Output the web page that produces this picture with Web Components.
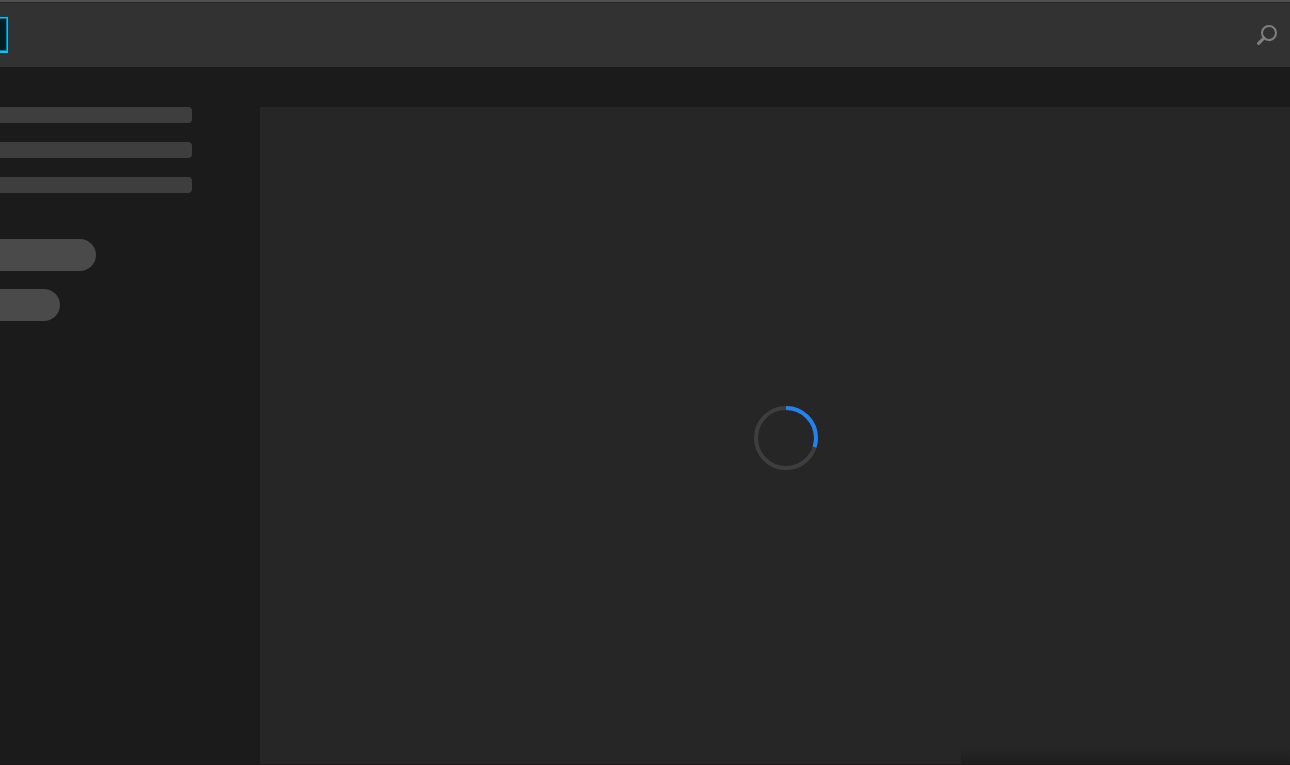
<!DOCTYPE html>
<html lang="en">
<head>
<meta charset="utf-8">
<title>Loading</title>
<style>
  body {
    margin: 0;
    background: #1b1b1b;
    font-family: "Liberation Sans", sans-serif;
  }
</style>
</head>
<body>
<app-shell>
  <app-header slot="header"></app-header>
  <side-nav slot="side">
    <skeleton-bar></skeleton-bar>
    <skeleton-bar></skeleton-bar>
    <skeleton-bar></skeleton-bar>
    <skeleton-bar slot="actions" kind="pill" size="large"></skeleton-bar>
    <skeleton-bar slot="actions" kind="pill"></skeleton-bar>
  </side-nav>
  <content-panel>
    <progress-circle value="30"></progress-circle>
  </content-panel>
</app-shell>

<script>
class AppShell extends HTMLElement {
  constructor() {
    super()
    this.attachShadow({ mode: 'open' }).innerHTML = `
      <style>
        :host {
          display: flex;
          flex-direction: column;
          box-sizing: border-box;
          min-height: 100vh;
          overflow: hidden;
          border-bottom: 1px solid #1b161a;
        }
        .body {
          flex: 1;
          display: grid;
          grid-template-columns: 260px 1fr;
          padding-top: 40px;
        }
        main {
          display: grid;
        }
      </style>
      <slot name="header"></slot>
      <div class="body">
        <slot name="side"></slot>
        <main><slot></slot></main>
      </div>
    `
  }
}

class AppHeader extends HTMLElement {
  constructor() {
    super()
    this.attachShadow({ mode: 'open' }).innerHTML = `
      <style>
        :host {
          display: block;
          border-top: 2px solid #505050;
          background: #323232;
        }
        header {
          display: flex;
          align-items: center;
          justify-content: space-between;
          height: 64px;
          padding-right: 12px;
          border-top: 1px solid #292929;
          overflow: hidden;
        }
        .logo {
          box-sizing: border-box;
          width: 36px;
          height: 36px;
          margin-left: -28px;
          border: 1px solid #00c8ff;
          border-bottom-width: 2px;
          background: #001d26;
          box-shadow: inset 0 0 0 1px #007c9e;
        }
        button {
          display: block;
          padding: 0;
          border: 0;
          background: none;
          color: #808080;
          cursor: pointer;
        }
        svg {
          display: block;
        }
      </style>
      <header>
        <a class="logo" href="#" aria-label="Home"></a>
        <button type="button" aria-label="Search">
          <svg width="22" height="22" viewBox="0 0 22 22" fill="none" stroke="currentColor" aria-hidden="true">
            <circle cx="13" cy="9" r="7" stroke-width="2"/>
            <path d="M8 14 2.6 19.4" stroke-width="3" stroke-linecap="round"/>
          </svg>
        </button>
      </header>
    `
  }
}

class SideNav extends HTMLElement {
  constructor() {
    super()
    this.attachShadow({ mode: 'open' }).innerHTML = `
      <style>
        :host {
          display: block;
          padding-right: 68px;
        }
        nav, .actions {
          display: grid;
          gap: 19px;
        }
        .actions {
          gap: 18px;
          margin-top: 46px;
        }
      </style>
      <nav aria-busy="true"><slot></slot></nav>
      <div class="actions"><slot name="actions"></slot></div>
    `
  }
}

class SkeletonBar extends HTMLElement {
  constructor() {
    super()
    this.attachShadow({ mode: 'open' }).innerHTML = `
      <style>
        :host {
          display: block;
          height: 16px;
          border-radius: 0 4px 4px 0;
          background: #3e3e3e;
        }
        :host([kind="pill"]) {
          width: 60px;
          height: 32px;
          border-radius: 0 16px 16px 0;
          background: #4a4a4a;
        }
        :host([size="large"]) {
          width: 96px;
        }
      </style>
    `
  }
}

class ContentPanel extends HTMLElement {
  constructor() {
    super()
    this.attachShadow({ mode: 'open' }).innerHTML = `
      <style>
        :host {
          display: flex;
          align-items: center;
          justify-content: center;
          position: relative;
          padding: 5px 0 0 22px;
          background: #262626;
        }
        /* fade above the bottom right corner */
        .fade {
          position: absolute;
          right: 0;
          bottom: 0;
          width: 329px;
          height: 16px;
          background: linear-gradient(transparent, #1e1e1e);
        }
      </style>
      <slot></slot>
      <div class="fade"></div>
    `
  }
}

class ProgressCircle extends HTMLElement {
  static get observedAttributes() {
    return ['value']
  }

  constructor() {
    super()
    this.attachShadow({ mode: 'open' })
  }

  connectedCallback() {
    this.render()
  }

  attributeChangedCallback() {
    if (this.isConnected) {
      this.render()
    }
  }

  render() {
    const value = Number(this.getAttribute('value')) || 0
    this.shadowRoot.innerHTML = `
      <style>
        :host {
          display: block;
          width: 64px;
          height: 64px;
        }
        svg {
          display: block;
        }
      </style>
      <svg width="64" height="64" viewBox="0 0 64 64" fill="none" stroke-width="4"
        role="progressbar" aria-label="Loading" aria-valuenow="${value}">
        <circle cx="32" cy="32" r="30" stroke="#3e3e3e"/>
        <circle cx="32" cy="32" r="30" stroke="#2183f2" pathLength="100"
          stroke-dasharray="${value} 100" transform="rotate(-90 32 32)"/>
      </svg>
    `
  }
}

customElements.define('app-shell', AppShell)
customElements.define('app-header', AppHeader)
customElements.define('side-nav', SideNav)
customElements.define('skeleton-bar', SkeletonBar)
customElements.define('content-panel', ContentPanel)
customElements.define('progress-circle', ProgressCircle)
</script>
</body>
</html>
